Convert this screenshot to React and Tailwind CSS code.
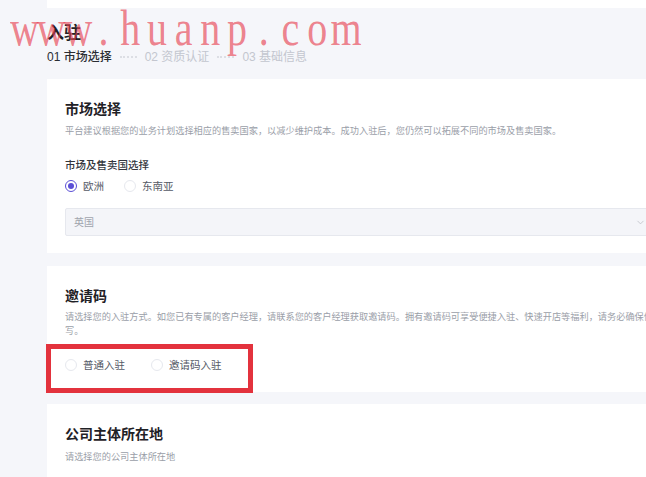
import { ChevronDown } from "lucide-react";

const font = { fontFamily: '"Liberation Sans", "Noto Sans CJK SC", sans-serif' };

const Radio = ({ checked, label, className = "" }) => (
  <label className={`flex items-center ${className}`}>
    <span
      className={`flex items-center justify-center w-[12px] h-[12px] rounded-full border bg-white ${
        checked ? "border-[#5b4fd6]" : "border-[#e6e8ee]"
      }`}
    >
      {checked && <span className="w-[6px] h-[6px] rounded-full bg-[#5b4fd6]" />}
    </span>
    <span className="ml-[6px] text-[10.5px] leading-[16px] text-[#555a66]">{label}</span>
  </label>
);

const Card = ({ title, children, className = "" }) => (
  <div className={`relative w-[622px] bg-white px-[18px] pt-[20px] ${className}`}>
    <h2 className="text-[14px] leading-[20px] font-bold text-[#1f2126]">{title}</h2>
    {children}
  </div>
);

const Watermark = () => {
  const chars = "www.huanp.com".split("");
  return (
    <div
      className="absolute left-[10px] top-[3px] flex origin-left scale-x-[0.8] pointer-events-none text-[50px] leading-[50px] text-[#e8404f]/65"
      style={{ fontFamily: '"Liberation Serif", serif' }}
    >
      {chars.map((c, i) => (
        <span key={i} className="w-[33.4px] text-center">
          {c}
        </span>
      ))}
    </div>
  );
};

const App = () => {
  return (
    <div className="relative w-[646px] h-[477px] overflow-hidden bg-[#f5f6fa]" style={font}>
      <div className="pl-[47px]">
        <div className="h-[8px] w-[622px] bg-white" />

        <h1 className="mt-[14px] text-[17px] leading-[24px] font-bold text-[#1f2126]">入驻</h1>
        <div className="mt-[3px] flex items-center text-[12px] leading-[16px]">
          <span className="font-medium text-[#2a2d33]">01 市场选择</span>
          <span className="mx-[8px] w-[17px] border-t-2 border-dotted border-[#dcdee4]" />
          <span className="text-[#c3c6cf]">02 资质认证</span>
          <span className="mx-[8px] w-[17px] border-t-2 border-dotted border-[#dcdee4]" />
          <span className="text-[#c3c6cf]">03 基础信息</span>
        </div>

        <Card title="市场选择" className="mt-[14px] pb-[17px]">
          <p className="mt-[5px] text-[9.2px] leading-[14px] text-[#9a9ea8]">
            平台建议根据您的业务计划选择相应的售卖国家，以减少维护成本。成功入驻后，您仍然可以拓展不同的市场及售卖国家。
          </p>
          <div className="mt-[20px] text-[10.5px] leading-[14px] font-medium text-[#33363d]">市场及售卖国选择</div>
          <div className="mt-[6px] flex items-center">
            <Radio checked label="欧洲" className="mr-[20px]" />
            <Radio label="东南亚" />
          </div>
          <div className="mt-[14px] flex h-[28px] items-center justify-between rounded-[2px] border border-[#e6e8ee] bg-[#f4f5f9] pl-[8px] pr-[4px]">
            <span className="text-[10px] text-[#a0a4ad]">英国</span>
            <ChevronDown size={11} strokeWidth={1.5} className="text-[#b4b7bf]" />
          </div>
        </Card>

        <Card title="邀请码" className="mt-[13px] pb-[19px]">
          <p className="mt-[4px] text-[9.2px] leading-[14px] text-[#9a9ea8]">
            <span className="whitespace-nowrap">
              请选择您的入驻方式。如您已有专属的客户经理，请联系您的客户经理获取邀请码。拥有邀请码可享受便捷入驻、快速开店等福利，请务必确保信息准确填
            </span>
            <br />
            写。
          </p>
          <div className="mt-[19px] flex items-center">
            <Radio label="普通入驻" className="mr-[26px]" />
            <Radio label="邀请码入驻" />
          </div>
          <div className="absolute left-[-1px] top-[78px] w-[207px] h-[49px] border-[5px] border-[#e3323d]" />
        </Card>

        <Card title="公司主体所在地" className="mt-[12px] pb-[20px]">
          <p className="mt-[6px] text-[9.2px] leading-[14px] text-[#9a9ea8]">请选择您的公司主体所在地</p>
        </Card>
      </div>

      <Watermark />
    </div>
  );
};

export default App;
